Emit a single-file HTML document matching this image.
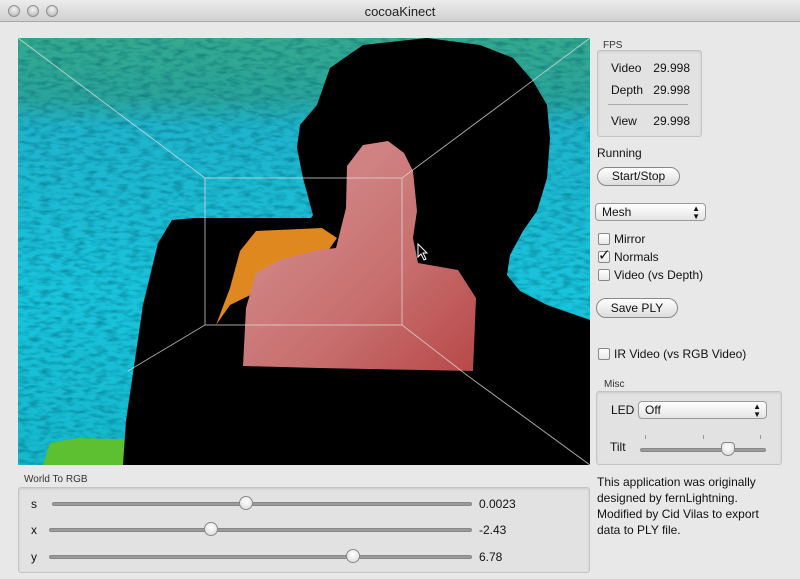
<!DOCTYPE html>
<html><head><meta charset="utf-8"><style>
*{margin:0;padding:0;box-sizing:border-box}
body{width:800px;height:579px;background:#e8e8e8;font-family:"Liberation Sans",sans-serif;font-size:12px;color:#111;position:relative;overflow:hidden}
.a{position:absolute;white-space:nowrap}
.tb{left:0;top:0;width:800px;height:22px;background:linear-gradient(#ececec,#d0d0d0);border-bottom:1px solid #a8a8a8}
.dot{width:12px;height:12px;border-radius:50%;background:radial-gradient(circle at 50% 35%,#f4f4f4,#b0b0b0);border:1px solid #909090;top:5px}
.box{background:#e2e2e2;border:1px solid #c4c4c4;border-radius:3px;box-shadow:inset 0 1px 2px rgba(0,0,0,.1)}
.btn{border:1px solid #888;border-radius:10px;background:linear-gradient(#fff,#dcdcdc);text-align:center;line-height:17px;font-size:12px}
.pop{border:1px solid #999;border-radius:4px;background:linear-gradient(#fff,#e4e4e4);line-height:16px;padding-left:6px}
.cb{width:12px;height:12px;border:1px solid #888;border-radius:2px;background:linear-gradient(#fff,#e8e8e8)}
.trk{height:4px;border-radius:2px;background:#9a9a9a;border:1px solid #888}
.knob{width:14px;height:14px;border-radius:50%;border:1px solid #888;background:radial-gradient(circle at 50% 35%,#fff,#d8d8d8)}
.sm{font-size:10px;color:#333}
</style></head><body>
<div class="a tb"></div>
<div class="a dot" style="left:8px"></div>
<div class="a dot" style="left:27px"></div>
<div class="a dot" style="left:46px"></div>
<div class="a" style="left:0;width:800px;top:4px;text-align:center;font-size:13px;color:#222">cocoaKinect</div>

<svg class="a" style="left:18px;top:38px" width="572" height="427" viewBox="0 0 572 427">
<defs>
<linearGradient id="bg" x1="0" y1="0" x2="0" y2="1">
<stop offset="0" stop-color="#34aa8e"/><stop offset=".14" stop-color="#2aa49a"/><stop offset=".21" stop-color="#1eb4cc"/><stop offset=".6" stop-color="#18c4dc"/><stop offset="1" stop-color="#16b8cc"/>
</linearGradient>
<linearGradient id="pk" x1="0" y1="0" x2="1" y2="1"><stop offset="0" stop-color="#d89494"/><stop offset=".6" stop-color="#c87070"/><stop offset="1" stop-color="#b84848"/></linearGradient>
<filter id="n"><feTurbulence type="fractalNoise" baseFrequency="0.09 0.25" numOctaves="2" seed="3"/><feColorMatrix values="0 0 0 0 0  0 0 0 0 0.1  0 0 0 0 0.15  0 0 0 -2.2 1.3"/></filter>
</defs>
<rect width="572" height="427" fill="url(#bg)"/>
<rect width="572" height="427" filter="url(#n)" opacity=".45"/>
<path d="M25 427 L32 405 L60 400 L125 402 L130 427Z" fill="#5cc030"/>
<path d="M345 7 L409 0 L462 7 L495 20 L515 43 L529 67 L532 100 L529 140 L519 173 L505 193 L492 217 L489 237 L502 253 L529 267 L572 282 L572 427 L105 427 L108 383 L125 267 L140 205 L154 182 L176 180 L293 180 L295 177 L285 140 L279 110 L282 87 L299 67 L312 30Z" fill="#000"/>
<path d="M198 287 L212 250 L222 213 L238 193 L304 190 L319 200 L300 227 L253 247 L212 267Z" fill="#e08820"/>
<path d="M329 128 L345 107 L370 103 L386 115 L395 133 L399 173 L395 200 L400 225 L440 232 L458 260 L455 333 L300 330 L225 328 L228 270 L238 235 L262 222 L300 212 L318 210 L328 170Z" fill="url(#pk)"/>
<g stroke="#ddd" stroke-width="1" fill="none" opacity=".75">
<rect x="187" y="140" width="197" height="147"/>
<line x1="0" y1="0" x2="187" y2="140"/><line x1="572" y1="0" x2="384" y2="140"/>
<line x1="110" y1="333" x2="187" y2="287"/><line x1="572" y1="427" x2="450" y2="338"/><line x1="450" y1="338" x2="384" y2="287"/>
</g>
<path d="M400 206 l0 13 l3 -3 l3 6 l2 -1 l-3 -6 l4 0z" fill="#000" stroke="#fff" stroke-width="1"/>
</svg>

<div class="a sm" style="left:603px;top:40px">FPS</div>
<div class="a box" style="left:597px;top:50px;width:105px;height:87px"></div>
<div class="a" style="left:611px;top:61px">Video</div><div class="a" style="left:643px;top:61px;width:47px;text-align:right">29.998</div>
<div class="a" style="left:611px;top:83px">Depth</div><div class="a" style="left:643px;top:83px;width:47px;text-align:right">29.998</div>
<div class="a" style="left:608px;top:104px;width:80px;height:1px;background:#aaa"></div>
<div class="a" style="left:611px;top:114px">View</div><div class="a" style="left:643px;top:114px;width:47px;text-align:right">29.998</div>
<div class="a" style="left:597px;top:146px">Running</div>
<div class="a btn" style="left:597px;top:167px;width:83px;height:19px">Start/Stop</div>
<div class="a pop" style="left:595px;top:203px;width:111px;height:18px">Mesh<span style="position:absolute;right:5px;font-size:8px;line-height:8px;top:1px">▲<br>▼</span></div>
<div class="a cb" style="left:598px;top:233px"></div><div class="a" style="left:614px;top:232px">Mirror</div>
<div class="a cb" style="left:598px;top:251px"></div><div class="a" style="left:598px;top:246px;font-size:15px">✓</div><div class="a" style="left:614px;top:250px">Normals</div>
<div class="a cb" style="left:598px;top:269px"></div><div class="a" style="left:614px;top:268px">Video (vs Depth)</div>
<div class="a btn" style="left:596px;top:298px;width:82px;height:20px;line-height:18px">Save PLY</div>
<div class="a cb" style="left:598px;top:348px"></div><div class="a" style="left:614px;top:347px">IR Video (vs RGB Video)</div>
<div class="a sm" style="left:604px;top:379px">Misc</div>
<div class="a box" style="left:596px;top:391px;width:186px;height:74px"></div>
<div class="a" style="left:611px;top:403px">LED</div>
<div class="a pop" style="left:638px;top:401px;width:129px;height:18px">Off<span style="position:absolute;right:5px;top:1px;font-size:8px;line-height:8px">▲<br>▼</span></div>
<div class="a" style="left:610px;top:440px">Tilt</div>
<div class="a" style="left:645px;top:435px;width:1px;height:4px;background:#999"></div>
<div class="a" style="left:703px;top:435px;width:1px;height:4px;background:#999"></div>
<div class="a" style="left:760px;top:435px;width:1px;height:4px;background:#999"></div>
<div class="a trk" style="left:640px;top:448px;width:126px"></div>
<div class="a knob" style="left:721px;top:442px;border-radius:4px 4px 7px 7px"></div>
<div class="a" style="left:597px;top:474px;line-height:16px;font-size:12px">This application was originally<br>designed by fernLightning.<br>Modified by Cid Vilas to export<br>data to PLY file.</div>

<div class="a sm" style="left:24px;top:474px">World To RGB</div>
<div class="a box" style="left:18px;top:487px;width:572px;height:86px"></div>
<div class="a" style="left:31px;top:497px">s</div><div class="a trk" style="left:52px;top:502px;width:420px"></div><div class="a knob" style="left:239px;top:496px"></div><div class="a" style="left:479px;top:497px">0.0023</div>
<div class="a" style="left:31px;top:523px">x</div><div class="a trk" style="left:49px;top:528px;width:423px"></div><div class="a knob" style="left:204px;top:522px"></div><div class="a" style="left:479px;top:523px">-2.43</div>
<div class="a" style="left:31px;top:550px">y</div><div class="a trk" style="left:49px;top:555px;width:423px"></div><div class="a knob" style="left:346px;top:549px"></div><div class="a" style="left:479px;top:550px">6.78</div>
</body></html>
